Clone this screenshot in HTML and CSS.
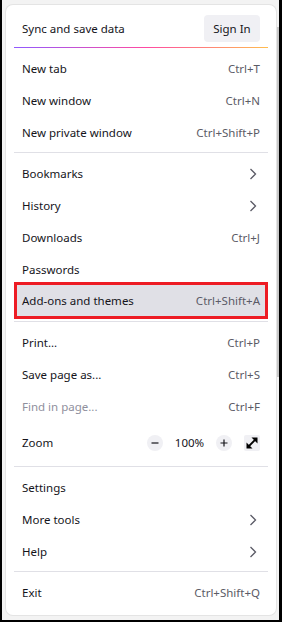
FILE: index.html
```
<!DOCTYPE html>
<html>
<head>
<meta charset="utf-8">
<link rel="stylesheet" href="styles.css">
</head>
<body>
<div class="frame">
  <div class="scroll"></div>
  <div class="panel">
    <div class="header">
      <span class="label">Sync and save data</span>
      <button class="signin">Sign In</button>
    </div>
    <div class="grad"></div>
    <div class="item"><span>New tab</span><span class="key">Ctrl+T</span></div>
    <div class="item"><span>New window</span><span class="key">Ctrl+N</span></div>
    <div class="item"><span>New private window</span><span class="key">Ctrl+Shift+P</span></div>
    <div class="sep"></div>
    <div class="item"><span>Bookmarks</span><svg class="chev" width="8" height="12" viewBox="0 0 8 12"><path d="M1.5 1 L6.5 6 L1.5 11" fill="none" stroke="#5b5b66" stroke-width="1.3"/></svg></div>
    <div class="item"><span>History</span><svg class="chev" width="8" height="12" viewBox="0 0 8 12"><path d="M1.5 1 L6.5 6 L1.5 11" fill="none" stroke="#5b5b66" stroke-width="1.3"/></svg></div>
    <div class="item"><span>Downloads</span><span class="key">Ctrl+J</span></div>
    <div class="item"><span>Passwords</span></div>
    <div class="item hl"><span>Add-ons and themes</span><span class="key">Ctrl+Shift+A</span></div>
    <div class="sep"></div>
    <div class="item"><span>Print...</span><span class="key">Ctrl+P</span></div>
    <div class="item"><span>Save page as...</span><span class="key">Ctrl+S</span></div>
    <div class="item"><span class="dis">Find in page...</span><span class="key">Ctrl+F</span></div>
    <div class="item zoom">
      <span>Zoom</span>
      <div class="zctl">
        <span class="circ"><svg width="8" height="8" viewBox="0 0 8 8"><path d="M0.5 4 H7.5" stroke="#15141a" stroke-width="1.2"/></svg></span>
        <span class="pct">100%</span>
        <span class="circ"><svg width="8" height="8" viewBox="0 0 8 8"><path d="M0.5 4 H7.5 M4 0.5 V7.5" stroke="#15141a" stroke-width="1.2"/></svg></span>
        <span class="full"><svg width="14" height="14" viewBox="0 0 14 14"><path d="M3 11 L11 3" stroke="#000" stroke-width="1.8"/><path d="M6.5 1.5 H12.5 V7.5 Z" fill="#000"/><path d="M1.5 6.5 V12.5 H7.5 Z" fill="#000"/></svg></span>
      </div>
    </div>
    <div class="sep"></div>
    <div class="item"><span>Settings</span></div>
    <div class="item"><span>More tools</span><svg class="chev" width="8" height="12" viewBox="0 0 8 12"><path d="M1.5 1 L6.5 6 L1.5 11" fill="none" stroke="#5b5b66" stroke-width="1.3"/></svg></div>
    <div class="item"><span>Help</span><svg class="chev" width="8" height="12" viewBox="0 0 8 12"><path d="M1.5 1 L6.5 6 L1.5 11" fill="none" stroke="#5b5b66" stroke-width="1.3"/></svg></div>
    <div class="sep"></div>
    <div class="item"><span>Exit</span><span class="key">Ctrl+Shift+Q</span></div>
  </div>
</div>
</body>
</html>
```
FILE: styles.css
```
* { box-sizing: border-box; }
html, body { margin: 0; padding: 0; }
body {
  width: 282px;
  height: 622px;
  font-family: "Noto Sans", "Open Sans", sans-serif;
  font-size: 11.5px;
  color: #15141a;
  overflow: hidden;
}
.frame {
  position: relative;
  width: 282px;
  height: 622px;
  background: #f3f3f3;
  border-left: 2px solid #000;
  border-right: 3px solid #000;
  border-bottom: 2px solid #000;
  padding: 5px 1px 0 4px;
}
.scroll {
  position: absolute;
  right: 0;
  top: 27px;
  width: 3px;
  height: 350px;
  background: #c8c8c8;
}
.panel {
  position: relative;
  width: 270px;
  height: 610px;
  background: #fff;
  border-radius: 7px;
  box-shadow: 0 0 0 1px #e4e4e4;
  padding: 8px 8px 6px 8px;
  display: flex;
  flex-direction: column;
}
.header {
  height: 30px;
  display: flex;
  align-items: center;
  justify-content: space-between;
  padding: 0 8px;
}
.label { padding-top: 1px; }
.signin {
  width: 56px;
  height: 27px;
  border: none;
  border-radius: 4px;
  background: #f0f0f4;
  font-family: inherit;
  font-size: 11.5px;
  font-weight: 400;
  color: #15141a;
  padding: 0;
}
.grad {
  height: 1px;
  margin: 4px 0 5px;
  background: linear-gradient(90deg, #9059ff 0%, #ff4aa2 52%, #ffbd4f 100%);
}
.item {
  height: 32px;
  flex: none;
  display: flex;
  align-items: center;
  justify-content: space-between;
  padding: 0 8px 1px;
}
.key { color: #5b5b66; }
.dis { color: #8f8f9d; }
.chev { margin-right: 3px; }
.hl {
  height: 37px;
  margin: -4px 0 -1px;
  padding: 0 5px 1px;
  background: #e0e0e6;
  border: 3px solid #ed1c24;
  position: relative;
}
.sep {
  height: 1px;
  flex: none;
  margin: 3px 0 5px;
  background: #e0e0e6;
}
.zoom { height: 40px; }
.zctl {
  display: flex;
  align-items: center;
}
.circ {
  width: 16px;
  height: 16px;
  border-radius: 50%;
  background: #f0f0f4;
  display: flex;
  align-items: center;
  justify-content: center;
}
.pct {
  width: 53px;
  text-align: center;
}
.full {
  width: 16px;
  height: 16px;
  margin-left: 12px;
  border-radius: 2px;
  background: #f0f0f4;
  display: flex;
  align-items: center;
  justify-content: center;
}
```
